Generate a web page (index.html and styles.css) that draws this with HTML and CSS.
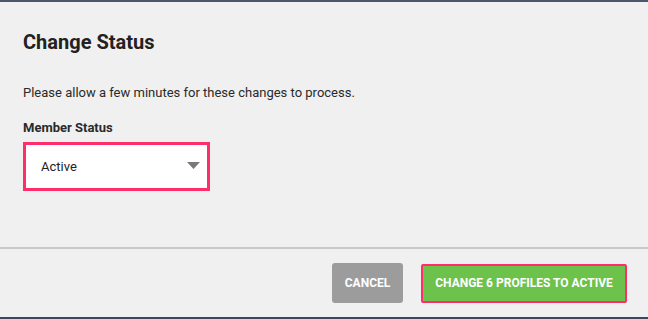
FILE: index.html
```html
<!DOCTYPE html>
<html>
<head>
<meta charset="utf-8">
<link rel="stylesheet" href="styles.css">
</head>
<body>
<div class="modal">
  <div class="body">
    <h2 class="title">Change Status</h2>
    <p class="note">Please allow a few minutes for these changes to process.</p>
    <label class="label">Member Status</label>
    <div class="select">
      <span class="value">Active</span>
      <svg class="caret" width="13" height="7" viewBox="0 0 13 7"><path d="M0 0H13L6.5 7Z" fill="#7a7a7a"/></svg>
    </div>
  </div>
  <div class="footer">
    <button class="btn cancel">CANCEL</button>
    <button class="btn confirm">CHANGE 6 PROFILES TO ACTIVE</button>
  </div>
</div>
</body>
</html>
```
FILE: styles.css
```css
html, body {
  margin: 0;
  padding: 0;
  background: #f0f0f0;
}
body {
  font-family: Roboto, "Noto Sans", sans-serif;
  color: #222;
}
.modal {
  width: 648px;
  height: 319px;
  box-sizing: border-box;
  border-top: 2px solid #4b5670;
  border-bottom: 2px solid #3d4759;
  display: flex;
  flex-direction: column;
}
.body {
  padding: 28px 23px 0;
  height: 247px;
  flex: none;
  box-sizing: border-box;
  border-bottom: 2px solid #c8c8c8;
  display: flex;
  flex-direction: column;
  align-items: flex-start;
}
.title {
  margin: 0;
  font-size: 20px;
  font-weight: 700;
  line-height: 24px;
  color: #222;
}
.note {
  margin: 30px 0 0;
  font-size: 13px;
  line-height: 17px;
  color: #2a2a2a;
}
.label {
  margin-top: 18px;
  font-size: 13px;
  font-weight: 700;
  line-height: 17px;
  color: #2a2a2a;
}
.select {
  margin-top: 6px;
  width: 187px;
  height: 49px;
  box-sizing: border-box;
  border: 3px solid #ff2e6a;
  background: #fff;
  display: flex;
  align-items: center;
  justify-content: space-between;
  padding: 0 7px 0 15px;
}
.value {
  font-size: 13px;
  color: #222;
}
.caret { margin-top: -2px; }
.footer {
  flex: 1;
  display: flex;
  justify-content: flex-end;
  align-items: center;
  gap: 18px;
  padding: 0 21px 0 0;
}
.btn {
  font-family: Roboto, "Noto Sans", sans-serif;
  font-weight: 700;
  font-size: 12px;
  color: #fff;
  border: none;
  height: 40px;
  padding: 0;
  cursor: pointer;
}
.cancel {
  width: 71px;
  background: #9c9c9c;
  border-radius: 3px;
}
.confirm {
  width: 206px;
  height: 39px;
  background: #6cc24a;
  border: 2px solid #ff2e6a;
  border-radius: 2px;
}
```
